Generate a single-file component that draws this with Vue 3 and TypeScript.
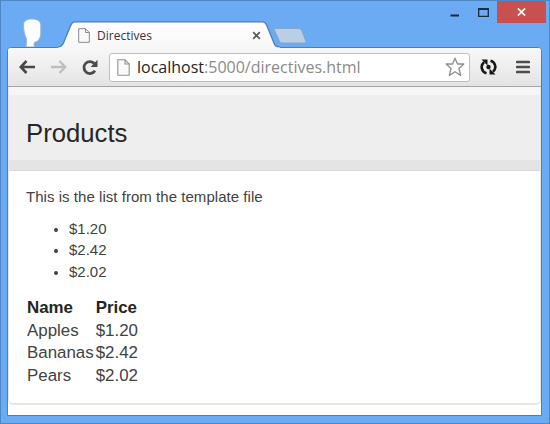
<script setup lang="ts">
interface Product {
  name: string
  price: string
}

const products: Product[] = [
  { name: 'Apples', price: '$1.20' },
  { name: 'Bananas', price: '$2.42' },
  { name: 'Pears', price: '$2.02' },
]
</script>

<template>
  <div class="window">
    <header class="titlebar">
      <svg class="avatar" width="26" height="32" viewBox="0 0 26 32">
        <path
          d="M4.500 9C4.500 4.800 8 3 13 3S21.800 5 21.800 9.500V18C21.500 22 19.500 25.500 16 26.200C14.800 26.500 14.800 28 15.500 31H7C7.500 28 8 25 7.200 22C5.800 19.500 4.500 15 4.500 9Z"
          fill="#fbfdfe"
          stroke="#9fb3c8"
          stroke-width="1"
        />
      </svg>
      <div class="tab">
        <svg class="tab-shape" width="222" height="27" viewBox="0 0 222 27">
          <defs>
            <linearGradient id="tabFill" x1="0" y1="0" x2="0" y2="1">
              <stop offset="0" stop-color="#ffffff" />
              <stop offset="1" stop-color="#f7f7f7" />
            </linearGradient>
          </defs>
          <path
            d="M0 27V26C3 26 4 25 5.500 22L12.500 5C13.500 2 14.500 .8 17 .8H204.500C207 .8 208 2 209 5L215.500 21C217 25 218 26 222 26V27Z"
            fill="url(#tabFill)"
          />
          <path
            d="M0 26C3 26 4 25 5.500 22L12.500 5C13.500 2 14.500 .8 17 .8H204.500C207 .8 208 2 209 5L215.500 21C217 25 218 26 222 26"
            fill="none"
            stroke="#4d7aae"
            stroke-width="1.200"
          />
        </svg>
        <svg class="tab-page" width="12" height="15" viewBox="0 0 12 15">
          <path d="M.7 .7H7.500L11.300 4.500V14.300H.7Z" fill="#fafafa" stroke="#8b8b8b" />
          <path d="M7.500 .7V4.500H11.300" fill="none" stroke="#8b8b8b" />
        </svg>
        <span class="tab-title">Directives</span>
        <svg class="tab-close" width="9" height="9" viewBox="0 0 9 9">
          <path d="M1.200 1.200L7.800 7.800M7.800 1.200L1.200 7.800" stroke="#5b5b5b" stroke-width="1.800" />
        </svg>
      </div>
      <svg class="new-tab" width="35" height="18" viewBox="0 0 35 18">
        <path
          d="M2.500 1.500H25C27 1.500 28 2 29 4L32.800 14C33.300 15.500 32.500 16 31 16H10C8 16 7 15.500 6.200 13.500L1.500 3C1 2 1.500 1.500 2.500 1.500Z"
          fill="#b9cfe5"
          stroke="#86a5c8"
        />
      </svg>
      <div class="controls">
        <svg class="minimize" width="10" height="3" viewBox="0 0 10 3">
          <path d="M.5 1.500H9" stroke="#1c2938" stroke-width="2" />
        </svg>
        <svg class="maximize" width="11" height="9" viewBox="0 0 11 9">
          <path d="M.7 1H10.300V8.300H.7Z" fill="none" stroke="#1c2d42" stroke-width="1.300" />
          <path d="M0 1H11" stroke="#1c2d42" stroke-width="2" />
        </svg>
        <div class="close">
          <svg width="9" height="8" viewBox="0 0 9 8">
            <path d="M.9 .4L8.100 7.600M8.100 .4L.9 7.600" stroke="#fff" stroke-width="1.700" />
          </svg>
        </div>
      </div>
    </header>

    <div class="browser">
      <nav class="toolbar">
        <svg class="back" width="17" height="14" viewBox="0 0 17 14">
          <path d="M7.500 1L1.800 7L7.500 13M2 7H16" fill="none" stroke="#484848" stroke-width="2.600" />
        </svg>
        <svg class="forward" width="17" height="14" viewBox="0 0 17 14">
          <path d="M9.500 1L15.200 7L9.500 13M15 7H1" fill="none" stroke="#bfbfbf" stroke-width="2.400" />
        </svg>
        <svg class="reload" width="18" height="17" viewBox="0 0 18 17">
          <path d="M13.500 4.600A6 6 0 1 0 14 11.800" fill="none" stroke="#4b4b4b" stroke-width="2.800" />
          <path d="M16.500 .8V8H9.500Z" fill="#4b4b4b" />
        </svg>
        <div class="address">
          <svg class="page" width="13" height="17" viewBox="0 0 13 17">
            <path d="M.8 .8H8L12.200 5V16.200H.8Z" fill="#fafafa" stroke="#929292" stroke-width="1.100" />
            <path d="M8 .8V5H12.200" fill="none" stroke="#929292" stroke-width="1.100" />
          </svg>
          <span class="url"><b>localhost</b>:5000/directives.html</span>
          <svg class="star" width="20" height="20" viewBox="0 0 20 20">
            <path
              d="M10 1.200L12.500 7H18.800L14 11.500L15.700 18.500L10 14.700L4.300 18.500L6 11.500L1.200 7H7.500Z"
              fill="#fff"
              stroke="#8d8d8d"
              stroke-width="1.300"
              stroke-linejoin="round"
            />
          </svg>
        </div>
        <svg class="sync" width="17" height="18" viewBox="0 0 17 18">
          <path d="M6.500 15.300A6.400 6.400 0 0 1 4 4.200M10.500 2.700A6.400 6.400 0 0 1 13 13.800" fill="none" stroke="#171717" stroke-width="2.600" />
          <path d="M1.500 1.500H7.500V7.500ZM15.500 16.500H9.500V10.500Z" fill="#171717" />
          <circle cx="8.500" cy="9" r="2.200" fill="#171717" />
        </svg>
        <svg class="menu" width="14" height="14" viewBox="0 0 14 14">
          <path d="M1.200 2H12.800M1.200 7H12.800M1.200 12H12.800" stroke="#4d4d4d" stroke-width="2.700" stroke-linecap="round" />
        </svg>
      </nav>

      <main class="page-body">
        <section class="panel">
          <div class="heading"><h3>Products</h3></div>
          <div class="content">
            <p>This is the list from the template file</p>
            <ul>
              <li v-for="product in products" :key="product.name">{{ product.price }}</li>
            </ul>
            <table>
              <thead>
                <tr><th>Name</th><th>Price</th></tr>
              </thead>
              <tbody>
                <tr v-for="product in products" :key="product.name">
                  <td>{{ product.name }}</td>
                  <td>{{ product.price }}</td>
                </tr>
              </tbody>
            </table>
          </div>
        </section>
      </main>
    </div>
  </div>
</template>

<style scoped>
.window {
  box-sizing: border-box;
  width: 550px;
  height: 424px;
  padding: 0 7px 7px 6px;
  display: flex;
  flex-direction: column;
  background: #6aabf4;
  border: 1px solid #4f86c4;
  font-family: "Liberation Sans", Arial, sans-serif;
  overflow: hidden;
}
svg {
  display: block;
  flex: none;
}
.titlebar {
  height: 46px;
  flex: none;
  display: flex;
  align-items: flex-start;
}
.avatar {
  margin: 15px 0 0 12px;
}
.tab {
  position: relative;
  box-sizing: border-box;
  width: 222px;
  height: 27px;
  margin: 20px 0 0 13px;
  padding: 0 19px 0 20px;
  display: flex;
  align-items: center;
  flex: none;
  z-index: 1;
}
.tab-shape {
  position: absolute;
  left: 0;
  top: 0;
}
.tab-page,
.tab-title,
.tab-close {
  position: relative;
}
.tab-page,
.tab-close {
  top: 1px;
}
.tab-title {
  top: 1px;
  margin-left: 7px;
  font: 12px/16px "Open Sans", "Noto Sans", sans-serif;
  color: #432f3d;
}
.tab-close {
  margin-left: auto;
}
.new-tab {
  margin: 26px 0 0 -7px;
}
.controls {
  display: flex;
  margin-left: auto;
}
.minimize {
  margin-top: 13px;
}
.maximize {
  margin: 7px 0 0 18px;
}
.close {
  width: 49px;
  height: 22px;
  margin: 0 -4px 0 8px;
  display: flex;
  align-items: center;
  justify-content: center;
  background: #c9504f;
}
.browser {
  flex: 1;
  display: flex;
  flex-direction: column;
  border: 1px solid #4d7fb7;
  border-radius: 4px 4px 0 0;
  background: #fff;
  overflow: hidden;
}
.toolbar {
  box-sizing: border-box;
  height: 39px;
  flex: none;
  display: flex;
  align-items: center;
  padding: 0 11px;
  background: linear-gradient(#f8f8f8, #e4e4e4);
  border-bottom: 1px solid #a5a5a5;
}
.forward {
  margin-left: 14px;
}
.reload {
  margin-left: 14px;
}
.address {
  box-sizing: border-box;
  width: 361px;
  height: 29px;
  margin-left: 10px;
  padding: 0 4px 0 7px;
  display: flex;
  align-items: center;
  flex: none;
  background: #fff;
  border: 1px solid #bdbdbd;
  border-radius: 3px;
}
.url {
  margin-left: 7px;
  font: 16px/22px "Open Sans", "Noto Sans", sans-serif;
  color: #8b8b8b;
  white-space: nowrap;
}
.url b {
  font-weight: 400;
  color: #252525;
}
.star {
  margin-left: auto;
}
.sync {
  margin-left: 10px;
}
.menu {
  margin-left: auto;
}
.page-body {
  flex: 1;
  display: flex;
  padding-bottom: 10px;
  background: #fffffb;
}
.panel {
  flex: 1;
  background: #fff;
  border: 1px solid #e5e5e5;
  border-width: 0 1px 2px;
  border-radius: 0 0 5px 5px;
}
.heading {
  box-sizing: border-box;
  height: 84px;
  padding: 31px 17px 0;
  background: linear-gradient(#f6f6f6 0 8px, #eeeeee 8px 73px, #e4e4e4 73px);
  border-bottom: 1px solid #d9d9d9;
}
h3 {
  margin: 0;
  font-size: 25.700px;
  line-height: 30px;
  font-weight: 400;
  color: #262626;
}
.content {
  padding: 15px 17px 0;
  color: #424242;
}
p {
  margin: 0;
  font-size: 15px;
  line-height: 22px;
  letter-spacing: 0.040px;
}
ul {
  margin: 10px 0 0;
  padding-left: 43px;
  font-size: 15px;
  line-height: 21.300px;
}
li::marker {
  font-size: 13px;
}
table {
  margin-top: 14px;
  border-spacing: 1px;
  font-size: 16.900px;
  line-height: 21.800px;
}
th,
td {
  padding: 0;
  text-align: left;
}
td:first-child {
  padding-right: 1px;
}
th {
  color: #252525;
}
</style>
